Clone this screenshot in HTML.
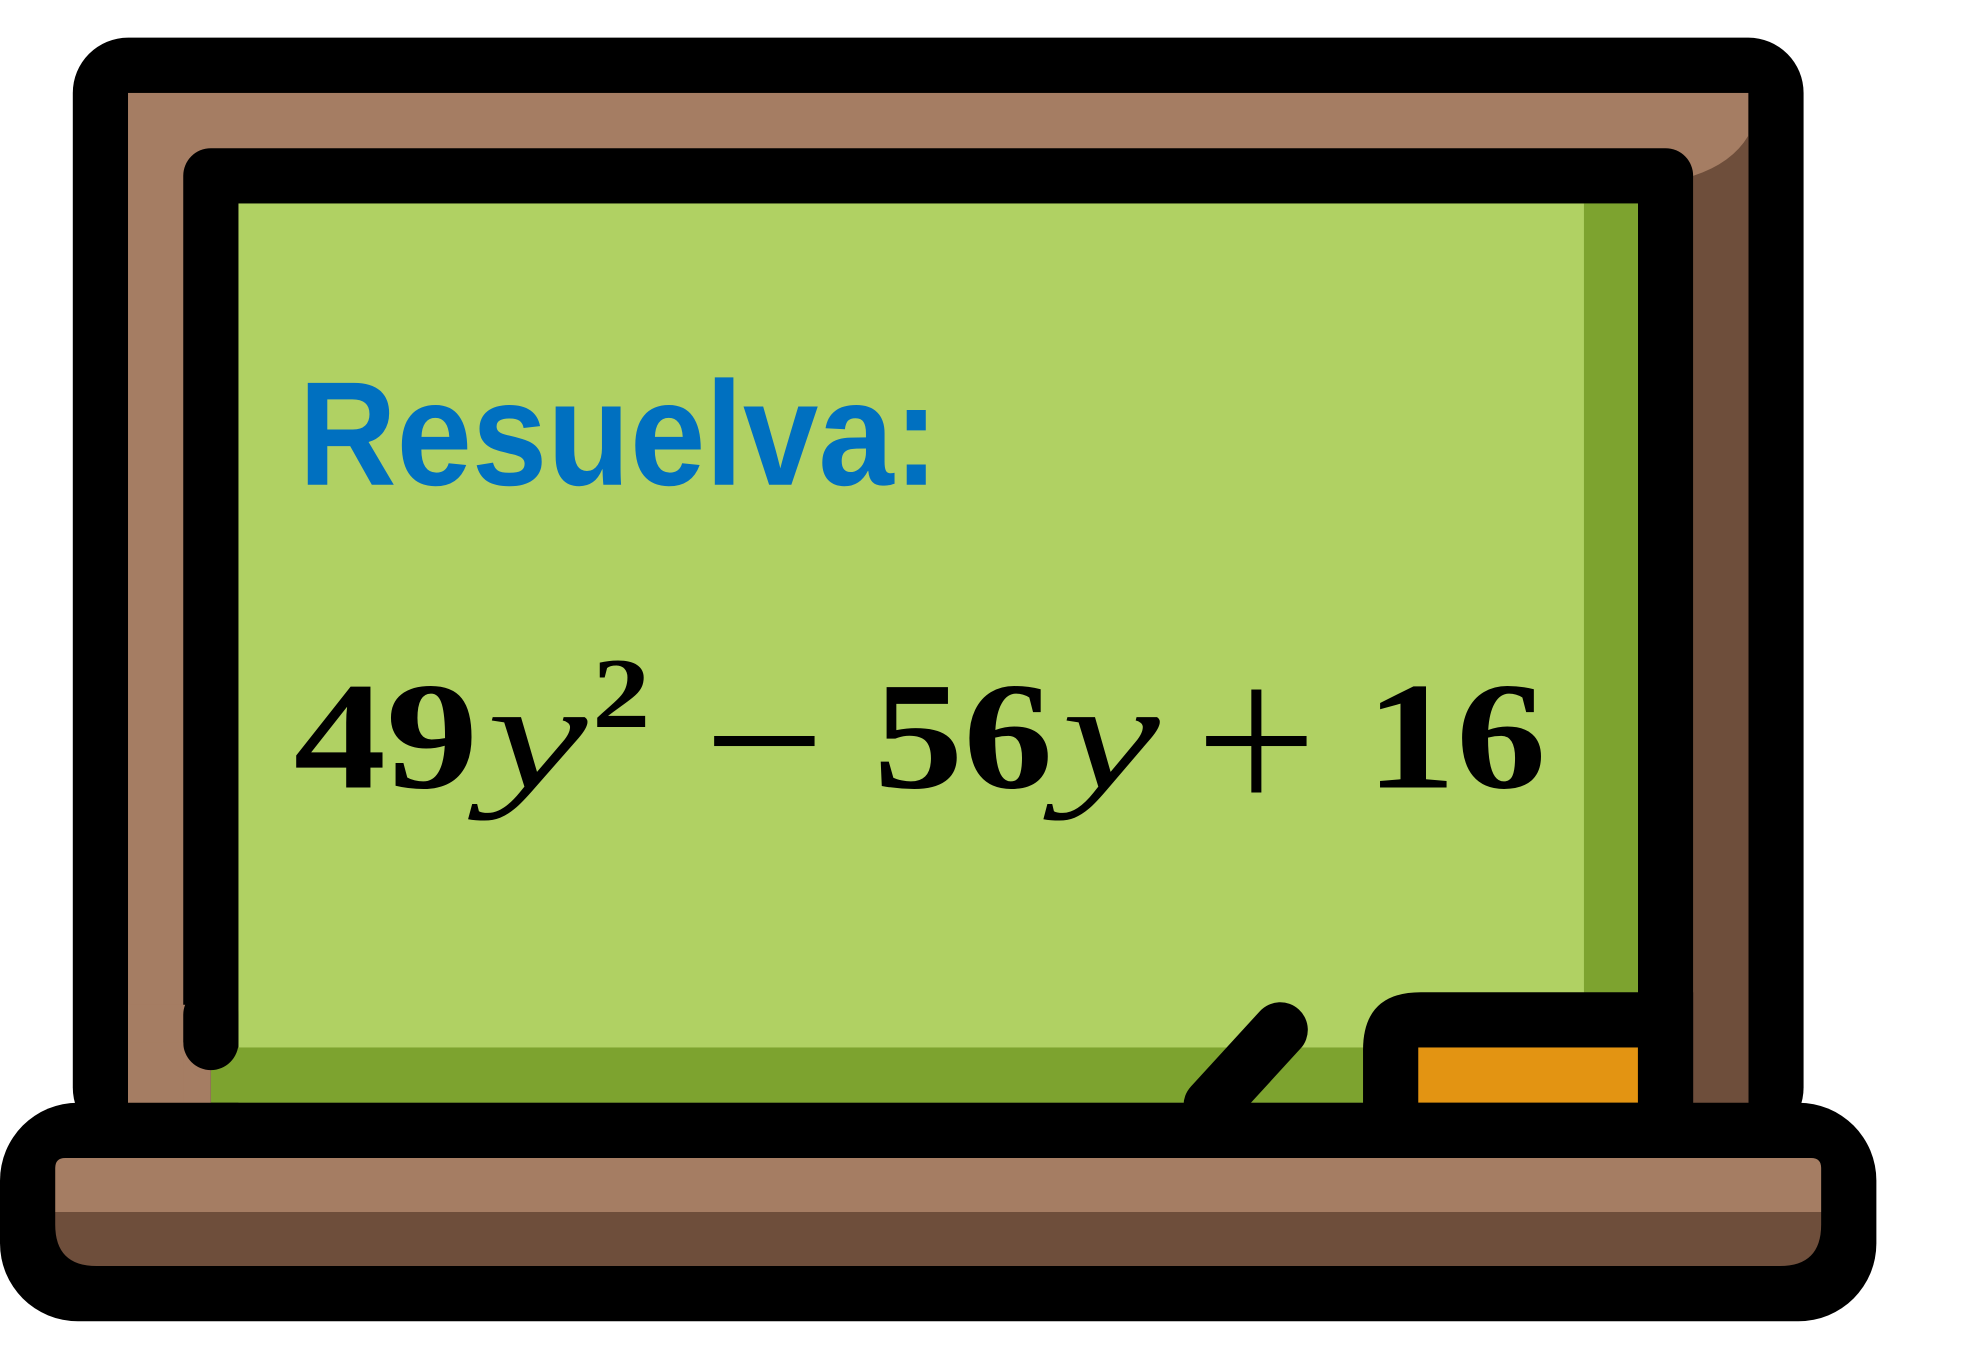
<!DOCTYPE html>
<html><head><meta charset="utf-8"><style>html,body{margin:0;padding:0;background:#fff}svg{display:block}</style></head>
<body>
<svg width="1968" height="1369" viewBox="0 0 1568 1090" preserveAspectRatio="none" xmlns="http://www.w3.org/2000/svg">
<rect width="1568" height="1090" fill="#fff"/>
<!-- outer frame -->
<rect x="58" y="30" width="1379" height="880" rx="44" fill="#000"/>
<rect x="102" y="74" width="1291" height="830" fill="#a57d63"/>
<path d="M1349 140 Q1380 130 1393 108 L1393 904 L1349 904 Z" fill="#6e4e3b"/>
<!-- board -->
<rect x="146" y="118" width="1203" height="790" rx="22" fill="#000"/>
<rect x="190" y="162" width="1115" height="716" fill="#b0d163"/>
<rect x="1262" y="162" width="43" height="716" fill="#7da32f"/>
<rect x="168" y="834" width="1137" height="44" fill="#7da32f"/>
<rect x="102" y="800" width="66" height="110" fill="#a57d63"/>
<path d="M168 808 L168 830" stroke="#000" stroke-width="44" stroke-linecap="round"/>
<rect x="102" y="830" width="44" height="50" fill="#a57d63"/>
<!-- chalk -->
<path d="M965 880 L1020 820" stroke="#000" stroke-width="44" stroke-linecap="round"/>
<!-- eraser -->
<path d="M1086 900 L1086 836 Q1086 790 1132 790 L1349 790 L1349 900 Z" fill="#000"/>
<rect x="1130" y="834" width="175" height="44" fill="#e39412"/>
<!-- tray -->
<rect x="0" y="878" width="1495" height="174" rx="62" fill="#000"/>
<path d="M44 930 Q44 922 52 922 L1443 922 Q1451 922 1451 930 L1451 965 L44 965 Z" fill="#a57d63"/>
<path d="M44 965 L1451 965 L1451 975 Q1451 1008 1418 1008 L77 1008 Q44 1008 44 975 Z" fill="#6e4e3b"/>
<!-- text -->
<text x="238" y="386" font-family="Liberation Sans, sans-serif" font-weight="bold" font-size="118" fill="#0070c0" textLength="510" lengthAdjust="spacingAndGlyphs">Resuelva:</text>
<g font-family="Liberation Serif, serif" font-size="122" font-weight="bold" fill="#000">
<text x="234" y="627" textLength="147" lengthAdjust="spacingAndGlyphs">49</text>
<text x="388" y="627" font-style="italic" font-weight="normal" textLength="80" lengthAdjust="spacingAndGlyphs">y</text>
<text x="472" y="579" font-size="80" textLength="46" lengthAdjust="spacingAndGlyphs">2</text>
<rect x="569" y="586" width="80" height="8"/>
<text x="696" y="627" textLength="143" lengthAdjust="spacingAndGlyphs">56</text>
<text x="846" y="627" font-style="italic" font-weight="normal" textLength="78" lengthAdjust="spacingAndGlyphs">y</text>
<rect x="961" y="586" width="80" height="8"/>
<rect x="997" y="549" width="8" height="82"/>
<text x="1088" y="627" textLength="144" lengthAdjust="spacingAndGlyphs">16</text>
</g>
</svg>
</body></html>
